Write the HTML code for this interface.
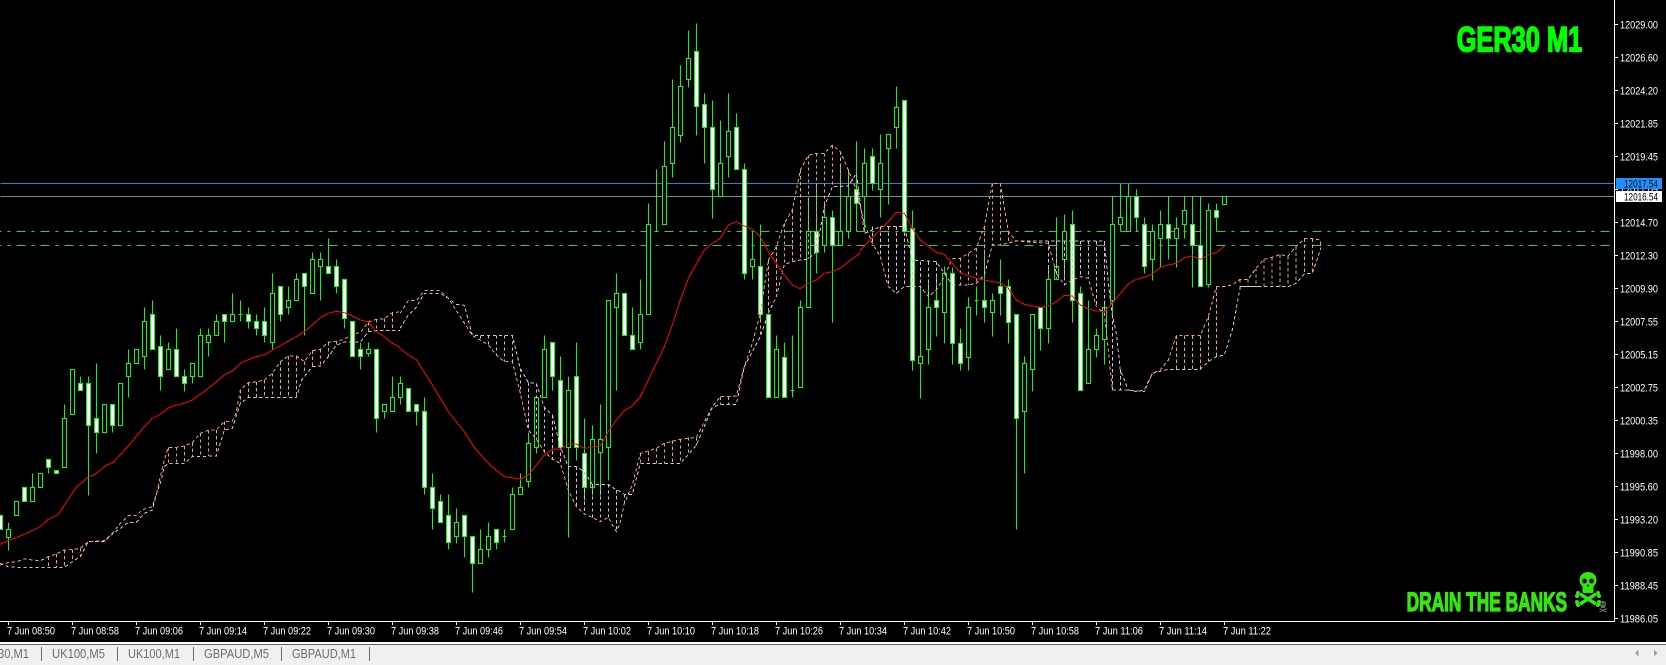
<!DOCTYPE html>
<html><head><meta charset="utf-8"><title>GER30 M1</title>
<style>html,body{margin:0;padding:0;width:1666px;height:665px;overflow:hidden;background:#000}svg{display:block}text{font-family:"Liberation Sans",sans-serif}</style></head>
<body>
<svg xmlns="http://www.w3.org/2000/svg" width="1666" height="665" viewBox="0 0 1666 665">
<rect width="1666" height="665" fill="#000"/>
<g shape-rendering="crispEdges" transform="translate(.5 .5)">
<path d="M0 183H1614" stroke="#2a80d8" fill="none"/>
<path d="M0 196H1614" stroke="#778899" fill="none"/>
<path d="M-8 231H1610M-8 245H1610" stroke="#32cd32" stroke-dasharray="9 6 3 6" fill="none"/>
<path fill="none" stroke="#00ff00" d="M8 522V550M32 473V487M48 467V473M64 404V418M80 376V383M88 376V495M96 363V453M112 425V432M128 349V397M144 307V369M152 300V314M160 335V390M168 342V349M176 328V349M184 369V391M192 376V383M200 328V335M208 328V356M216 314V321M224 321V342M232 293V314M240 300V321M238 314h4M248 307V328M256 314V335M264 307V342M272 273V349M280 314V321M288 286V314M296 273V279M304 286V335M312 252V259M320 252V300M328 238V266M336 259V293M344 318V328M360 342V369M368 342V356M376 418V432M384 411V418M392 376V397M400 376V404M416 411V425M424 397V494M432 473V529M440 494V501M448 494V549M456 508V543M464 536V557M472 563V592M480 529V549M488 522V557M496 542V549M504 529V542M502 536h4M512 487V494M520 473V487M528 432V487M536 447V453M544 335V349M552 376V390M560 356V380M568 376V537M576 342V460M584 418V500M592 425V495M600 404V495M608 447V480M616 273V390M632 307V335M640 279V349M648 203V224M656 169V231M654 231h4M664 141V166M672 79V177M680 65V142M688 30V87M696 23V135M704 93V163M712 100V218M720 120V163M728 93V177M736 113V127M744 163V279M752 231V279M760 224V321M776 335V349M784 342V357M792 335V397M790 390h4M800 300V307M808 200V231M816 183V273M824 203V252M832 210V322M840 163V231M848 169V238M856 141V231M864 148V231M872 148V190M880 134V217M888 148V204M896 86V148M912 210V370M920 285V398M928 280V364M936 273V336M944 266V343M952 267V364M960 328V370M968 297V370M976 286V315M974 300h4M984 249V322M992 293V336M1000 259V315M1008 279V343M1016 418V529M1024 356V473M1032 369V391M1040 328V350M1048 266V343M1056 217V266M1064 214V280M1072 210V322M1080 286V293M1088 300V349M1096 328V357M1104 300V364M1112 196V315M1120 183V231M1128 183V196M1136 189V231M1144 217V273M1152 224V280M1160 210V267M1168 196V259M1176 217V267M1174 231h4M1184 196V238M1192 196V287M1200 196V245M1208 203V287M1216 203V231"/>
<path fill="#000" stroke="#00ff00" d="M6 529h4v8h-4zM14 501h4v14h-4zM30 487h4v14h-4zM38 473h4v14h-4zM62 418h4v49h-4zM70 369h4v45h-4zM102 404h4v28h-4zM118 383h4v42h-4zM126 363h4v13h-4zM134 349h4v14h-4zM142 321h4v35h-4zM166 349h4v20h-4zM190 363h4v13h-4zM198 335h4v41h-4zM206 335h4v7h-4zM214 321h4v14h-4zM230 314h4v7h-4zM270 293h4v49h-4zM286 300h4v7h-4zM294 279h4v21h-4zM310 259h4v34h-4zM318 259h4v7h-4zM366 349h4v4h-4zM382 404h4v7h-4zM390 397h4v14h-4zM398 383h4v14h-4zM454 522h4v14h-4zM478 549h4v14h-4zM486 536h4v13h-4zM510 494h4v35h-4zM518 487h4v7h-4zM526 443h4v38h-4zM534 397h4v50h-4zM542 349h4v48h-4zM566 390h4v57h-4zM590 439h4v48h-4zM598 439h4v13h-4zM606 300h4v147h-4zM614 293h4v14h-4zM638 314h4v28h-4zM646 224h4v90h-4zM662 166h4v58h-4zM670 127h4v36h-4zM678 86h4v49h-4zM686 58h4v21h-4zM718 163h4v33h-4zM726 131h4v25h-4zM750 259h4v7h-4zM774 349h4v48h-4zM798 307h4v80h-4zM806 231h4v76h-4zM822 217h4v28h-4zM838 231h4v14h-4zM846 196h4v35h-4zM862 163h4v33h-4zM878 163h4v26h-4zM886 134h4v14h-4zM894 107h4v20h-4zM918 356h4v7h-4zM926 307h4v42h-4zM942 273h4v39h-4zM966 307h4v50h-4zM990 300h4v12h-4zM1022 363h4v48h-4zM1030 314h4v55h-4zM1046 279h4v49h-4zM1054 266h4v13h-4zM1062 231h4v28h-4zM1086 349h4v34h-4zM1094 335h4v14h-4zM1102 307h4v32h-4zM1110 224h4v76h-4zM1118 217h4v7h-4zM1126 196h4v35h-4zM1150 231h4v28h-4zM1158 224h4v14h-4zM1174 228h4v10h-4zM1182 210h4v14h-4zM1206 210h4v74h-4zM1222 196h4v8h-4z"/>
<path fill="#fff" stroke="#00ff00" d="M-2 515h4v14h-4zM22 487h4v14h-4zM46 459h4v8h-4zM54 470h4v3h-4zM78 383h4v7h-4zM86 383h4v42h-4zM94 418h4v14h-4zM110 404h4v21h-4zM150 314h4v35h-4zM158 346h4v30h-4zM174 349h4v27h-4zM182 376h4v7h-4zM222 314h4v7h-4zM246 314h4v7h-4zM254 321h4v7h-4zM262 321h4v14h-4zM278 286h4v28h-4zM302 273h4v13h-4zM326 266h4v7h-4zM334 266h4v20h-4zM342 279h4v39h-4zM350 321h4v35h-4zM358 349h4v7h-4zM374 349h4v69h-4zM406 388h4v23h-4zM414 404h4v7h-4zM422 411h4v76h-4zM430 487h4v21h-4zM438 501h4v21h-4zM446 515h4v27h-4zM462 515h4v21h-4zM470 536h4v27h-4zM494 529h4v13h-4zM550 342h4v34h-4zM558 380h4v67h-4zM574 376h4v71h-4zM582 453h4v34h-4zM622 293h4v42h-4zM630 335h4v14h-4zM694 51h4v55h-4zM702 104h4v23h-4zM710 127h4v62h-4zM734 127h4v42h-4zM742 169h4v104h-4zM758 266h4v48h-4zM766 314h4v83h-4zM782 357h4v40h-4zM814 231h4v21h-4zM830 217h4v28h-4zM854 189h4v14h-4zM870 156h4v27h-4zM902 100h4v131h-4zM910 228h4v132h-4zM934 300h4v7h-4zM950 273h4v70h-4zM958 343h4v20h-4zM982 300h4v7h-4zM998 286h4v7h-4zM1006 286h4v36h-4zM1014 314h4v104h-4zM1038 307h4v21h-4zM1070 224h4v76h-4zM1078 293h4v97h-4zM1134 196h4v21h-4zM1142 224h4v42h-4zM1166 224h4v14h-4zM1190 224h4v21h-4zM1198 245h4v41h-4zM1214 210h4v7h-4z"/>
</g>
<g shape-rendering="crispEdges" fill="none" stroke-width="3" stroke-dasharray="10 8">
<g transform="translate(0 200) scale(.33333)">
<path stroke="#d8bfd8" d="M0 1090L25 1100L50 1102L193 1102L217 1085L241 1070L265 1025L313 1025L337 1002L361 985L385 967L409 967L433 940L457 930L470 880L481 850L493 800L505 790L553 790L577 770L649 768L673 690L697 685L721 610L745 592L889 592L905 540L937 500L961 498L985 470L1009 436L1033 426L1081 426L1105 395L1129 392L1200 392"/>
<path stroke="#f4a460" d="M0 1095L25 1088L50 1085L73 1077L97 1080L121 1082L145 1070L169 1062L193 1050L217 1049L241 1045L265 1025L313 1022L337 1000L361 970L385 947L409 947L425 930L457 920L470 880L481 830L493 780L505 742L529 742L553 738L577 728L601 700L625 691L649 690L673 665L697 663L708 640L721 570L745 548L769 546L793 540L817 520L841 485L865 468L889 468L913 485L937 452L961 448L985 426L1009 424L1033 418L1057 402L1081 398L1105 366L1129 358L1153 356L1177 338L1200 336"/>
<path stroke="#f4a460" d="M145 1070V1102M169 1062V1102M193 1050V1102M217 1049V1085M241 1045V1070M505 742V790M529 742V790M553 738V790M577 728V770M601 700V768M625 691V768M649 690V768M673 665V690M721 570V610M745 548V592M769 546V592M793 540V592M817 520V592M841 485V592M865 468V592M889 468V592M913 485V520M937 452V500M961 448V498M985 426V470M1009 424V436M1105 366V395M1129 358V392M1153 356V392M1177 338V392"/>
</g>
<g transform="translate(400 200) scale(.33333)">
<path stroke="#d8bfd8" d="M0 385L25 345L49 322L73 280L121 280L145 295L169 313L193 316L217 406L337 406L361 505L385 548L409 550L433 622L457 645L481 740L505 800L529 800L553 815L577 853L625 853L649 870L660 874L673 883L697 883L721 790L841 790L889 736L937 622L961 613L1009 613L1033 500L1081 410L1105 340"/>
<path stroke="#f4a460" d="M0 340L25 302L49 302L73 272L121 272L145 295L217 406L265 435L289 465L313 485L337 485L361 580L385 690L409 718L433 755L457 778L481 790L505 870L529 920L553 942L577 952L601 965L625 952L637 975L649 995L660 970L673 910L697 855L721 760L769 745L793 730L841 718L889 712L937 620L961 590L985 590L1009 588L1033 500L1057 430L1081 340L1105 180"/>
<path stroke="#d8bfd8" d="M241 406V425M265 406V435M289 406V465M313 406V485M337 406V485M361 505V580M385 548V690M409 550V718M433 622V755M457 645V778M481 740V790M505 800V870M529 800V920M553 815V942M577 853V952M601 853V965M625 853V952M649 870V995M673 883V910"/>
<path stroke="#f4a460" d="M721 760V790M745 755V790M769 745V790M793 730V790M817 722V790M841 718V790M865 712V760M889 712V736M961 590V613M985 590V613M1081 340V410M1105 180V340"/>
</g>
<g transform="translate(560 10) scale(.33333)">
<path stroke="#d8bfd8" d="M625 910L649 860L673 764L697 755L721 750L745 747L769 725L793 590L817 530L865 528L889 490L913 670L961 650L1033 650L1057 750L1129 755L1153 790L1177 825"/>
<path stroke="#f4a460" d="M625 750L649 710L673 640L697 600L721 480L745 436L769 430L793 430L817 406L841 425L865 480L889 540L913 640L937 700L961 740L985 830L1009 850L1033 830L1081 830L1105 860L1129 840L1153 800L1177 745"/>
<path stroke="#f4a460" d="M649 710V860M673 640V764M697 600V755M721 480V750M745 436V747M769 430V725M793 430V590M817 406V530M841 425V528M865 480V528"/>
<path stroke="#d8bfd8" d="M937 650V700M961 650V740M985 650V830M1009 650V850M1033 650V830M1057 750V830M1081 755V830M1105 755V860M1129 755V840"/>
</g>
<g transform="translate(860 160) scale(.33333)">
<path stroke="#d8bfd8" d="M277 375L325 375L349 370L373 345L397 255L421 255L469 243L733 243L745 370L757 465L769 520L781 630L805 690L829 695L853 690L877 640L925 628L1021 628L1045 605L1069 590L1093 585L1117 510L1141 380L1200 380"/>
<path stroke="#f4a460" d="M277 295L301 295L325 280L349 265L373 200L397 70L421 70L445 215L469 243L565 250L589 340L613 375L637 360L661 350L685 355L709 440L733 460L745 570L757 690L805 690L853 695L877 640L901 630L925 600L949 527L1021 527L1045 470L1069 380"/>
<path stroke="#f4a460" d="M301 295V375M325 280V375M349 265V370M373 200V345M397 70V255M421 70V255M445 215V250M949 527V628M973 527V628M997 527V628M1021 527V628M1045 470V605M1069 380V590"/>
<path stroke="#d8bfd8" d="M565 243V340M589 243V355M613 243V375M637 243V355M661 243V350M685 243V355M709 243V440M733 243V460M757 465V690M781 630V690"/>
</g>
<g transform="translate(1210 180) scale(.33333)">
<path stroke="#f4a460" d="M18 320L42 320L66 315L90 298L114 298L138 265L162 238L186 232L210 224L234 228L258 200L283 176L307 176L331 180L331 210"/>
<path stroke="#d8bfd8" d="M90 320L234 320L258 310L283 282L307 280L331 210"/>
<path stroke="#f4a460" d="M90 298V320M114 298V318M138 265V320M162 238V320M186 232V320M210 224V320M234 228V320M258 200V310M283 176V282M307 176V280"/>
</g>
</g>
<g shape-rendering="crispEdges" fill="none" stroke="#ff0000" stroke-width="3">
<path transform="translate(0 200) scale(.33333)" d="M0 1033L25 1022L73 1003L121 980L145 958L175 943L200 905L230 860L265 832L290 820L320 795L340 787L385 738L433 680L457 655L481 643L505 624L529 615L553 610L577 600L625 565L673 525L697 513L725 487L769 470L793 465L817 450L841 437L889 410L913 395L937 375L961 353L985 340L1009 334L1033 338L1057 348L1081 360L1105 365L1129 395L1153 410L1177 430L1200 442"/>
<path transform="translate(400 200) scale(.33333)" d="M0 445L25 465L50 480L97 555L145 635L193 695L225 745L270 795L313 830L361 837L385 825L433 765L457 748L481 747L505 732L529 732L553 745L601 738L625 695L649 660L673 632L697 618L721 590L769 490L793 440L817 375L841 300L865 235L913 150L937 130L961 115L985 75L1009 65L1033 78L1057 88L1081 110L1105 155L1129 190L1153 225L1177 255L1200 266"/>
<path transform="translate(560 10) scale(.33333)" d="M720 836L745 820L769 810L793 790L817 785L841 775L865 755L889 738L900 728"/>
<path transform="translate(860 160) scale(.33333)" d="M0 272L25 245L61 210L85 185L109 157L133 160L157 205L181 240L205 258L229 277L253 283L277 310L301 338L325 347L349 355L397 365L421 368L445 385L469 420L493 433L517 438L541 442L565 438L589 425L613 406L637 408L661 435L685 447L709 453L733 455L757 430L781 400L805 372L829 358L853 352L877 342L901 322L925 315L949 310L973 293L997 288L1021 298L1045 285L1069 278L1093 258"/>
</g>
<g shape-rendering="crispEdges" stroke="#fff" fill="none">
<path d="M1614.5 0V621.5M0 621.5H1614.5"/>
<path d="M1615 24.5h3M1615 57.5h3M1615 90.5h3M1615 123.5h3M1615 156.5h3M1615 189.5h3M1615 222.5h3M1615 255.5h3M1615 288.5h3M1615 321.5h3M1615 354.5h3M1615 387.5h3M1615 420.5h3M1615 453.5h3M1615 486.5h3M1615 519.5h3M1615 552.5h3M1615 585.5h3M1615 618.5h3"/>
<path d="M8.5 622v3M72.5 622v3M136.5 622v3M200.5 622v3M264.5 622v3M328.5 622v3M392.5 622v3M456.5 622v3M520.5 622v3M584.5 622v3M648.5 622v3M712.5 622v3M776.5 622v3M840.5 622v3M904.5 622v3M968.5 622v3M1032.5 622v3M1096.5 622v3M1160.5 622v3M1224.5 622v3"/>
</g>
<g fill="#fff" font-size="11" lengthAdjust="spacingAndGlyphs">
<text x="1620" y="28.5" textLength="38" lengthAdjust="spacingAndGlyphs">12029.00</text>
<text x="1620" y="61.5" textLength="38" lengthAdjust="spacingAndGlyphs">12026.60</text>
<text x="1620" y="94.5" textLength="38" lengthAdjust="spacingAndGlyphs">12024.20</text>
<text x="1620" y="127.5" textLength="38" lengthAdjust="spacingAndGlyphs">12021.85</text>
<text x="1620" y="160.5" textLength="38" lengthAdjust="spacingAndGlyphs">12019.45</text>
<text x="1620" y="193.5" textLength="38" lengthAdjust="spacingAndGlyphs">12017.05</text>
<text x="1620" y="226.5" textLength="38" lengthAdjust="spacingAndGlyphs">12014.70</text>
<text x="1620" y="259.5" textLength="38" lengthAdjust="spacingAndGlyphs">12012.30</text>
<text x="1620" y="292.5" textLength="38" lengthAdjust="spacingAndGlyphs">12009.90</text>
<text x="1620" y="325.5" textLength="38" lengthAdjust="spacingAndGlyphs">12007.55</text>
<text x="1620" y="358.5" textLength="38" lengthAdjust="spacingAndGlyphs">12005.15</text>
<text x="1620" y="391.5" textLength="38" lengthAdjust="spacingAndGlyphs">12002.75</text>
<text x="1620" y="424.5" textLength="38" lengthAdjust="spacingAndGlyphs">12000.35</text>
<text x="1620" y="457.5" textLength="38" lengthAdjust="spacingAndGlyphs">11998.00</text>
<text x="1620" y="490.5" textLength="38" lengthAdjust="spacingAndGlyphs">11995.60</text>
<text x="1620" y="523.5" textLength="38" lengthAdjust="spacingAndGlyphs">11993.20</text>
<text x="1620" y="556.5" textLength="38" lengthAdjust="spacingAndGlyphs">11990.85</text>
<text x="1620" y="589.5" textLength="38" lengthAdjust="spacingAndGlyphs">11988.45</text>
<text x="1620" y="622.5" textLength="38" lengthAdjust="spacingAndGlyphs">11986.05</text>
</g>
<rect x="1616" y="178" width="46" height="11" fill="#1e90ff"/>
<text x="1624" y="187.5" font-size="11" fill="#0a0a0a" textLength="34" lengthAdjust="spacingAndGlyphs">12017.54</text>
<rect x="1616" y="191" width="46" height="11" fill="#fff"/>
<text x="1624" y="200.5" font-size="11" fill="#000" textLength="34" lengthAdjust="spacingAndGlyphs">12016.54</text>
<g fill="#fff" font-size="11">
<text x="7" y="634.5" textLength="48" lengthAdjust="spacingAndGlyphs">7 Jun 08:50</text>
<text x="71" y="634.5" textLength="48" lengthAdjust="spacingAndGlyphs">7 Jun 08:58</text>
<text x="135" y="634.5" textLength="48" lengthAdjust="spacingAndGlyphs">7 Jun 09:06</text>
<text x="199" y="634.5" textLength="48" lengthAdjust="spacingAndGlyphs">7 Jun 09:14</text>
<text x="263" y="634.5" textLength="48" lengthAdjust="spacingAndGlyphs">7 Jun 09:22</text>
<text x="327" y="634.5" textLength="48" lengthAdjust="spacingAndGlyphs">7 Jun 09:30</text>
<text x="391" y="634.5" textLength="48" lengthAdjust="spacingAndGlyphs">7 Jun 09:38</text>
<text x="455" y="634.5" textLength="48" lengthAdjust="spacingAndGlyphs">7 Jun 09:46</text>
<text x="519" y="634.5" textLength="48" lengthAdjust="spacingAndGlyphs">7 Jun 09:54</text>
<text x="583" y="634.5" textLength="48" lengthAdjust="spacingAndGlyphs">7 Jun 10:02</text>
<text x="647" y="634.5" textLength="48" lengthAdjust="spacingAndGlyphs">7 Jun 10:10</text>
<text x="711" y="634.5" textLength="48" lengthAdjust="spacingAndGlyphs">7 Jun 10:18</text>
<text x="775" y="634.5" textLength="48" lengthAdjust="spacingAndGlyphs">7 Jun 10:26</text>
<text x="839" y="634.5" textLength="48" lengthAdjust="spacingAndGlyphs">7 Jun 10:34</text>
<text x="903" y="634.5" textLength="48" lengthAdjust="spacingAndGlyphs">7 Jun 10:42</text>
<text x="967" y="634.5" textLength="48" lengthAdjust="spacingAndGlyphs">7 Jun 10:50</text>
<text x="1031" y="634.5" textLength="48" lengthAdjust="spacingAndGlyphs">7 Jun 10:58</text>
<text x="1095" y="634.5" textLength="48" lengthAdjust="spacingAndGlyphs">7 Jun 11:06</text>
<text x="1159" y="634.5" textLength="48" lengthAdjust="spacingAndGlyphs">7 Jun 11:14</text>
<text x="1223" y="634.5" textLength="48" lengthAdjust="spacingAndGlyphs">7 Jun 11:22</text>
</g>
<text x="1456.7" y="51.6" font-size="35" font-weight="700" fill="#00ff00" stroke="#00ff00" stroke-width="1.6" textLength="125.5" lengthAdjust="spacingAndGlyphs">GER30 M1</text>
<text x="1406.6" y="610.8" font-size="26.5" font-weight="700" fill="#33e80f" stroke="#33e80f" stroke-width="1.3" textLength="160.5" lengthAdjust="spacingAndGlyphs">DRAIN THE BANKS</text>
<g id="sk">
<path fill="#33e80f" d="M1588 572c5 0 8.500 3.500 8.500 8 0 3-1.500 5-3 6.500v4.500c0 1.200-1 2-2 2h-7c-1 0-2-.8-2-2v-4.500c-1.500-1.500-3-3.500-3-6.500 0-4.500 3.500-8 8.500-8z"/>
<ellipse cx="1584.500" cy="581" rx="2.300" ry="2.500" fill="#000"/><ellipse cx="1591.500" cy="581" rx="2.300" ry="2.500" fill="#000"/>
<path d="M1588 584l-1.200 2.500h2.400z" fill="#000"/>
<path d="M1580 594l16 10M1596 594l-16 10" stroke="#33e80f" stroke-width="3.500"/>
<g fill="#33e80f"><circle cx="1578" cy="593" r="2"/><circle cx="1577" cy="596" r="2"/><circle cx="1598" cy="593" r="2"/><circle cx="1599" cy="596" r="2"/><circle cx="1578" cy="605" r="2"/><circle cx="1577" cy="602" r="2"/><circle cx="1598" cy="605" r="2"/><circle cx="1599" cy="602" r="2"/></g>
</g>
<g transform="translate(1603 601)">
<path fill="#666" d="M0 0c2 0 3.200 1.300 3.200 3 0 1.200-.6 2-1.200 2.500v1.500h-4v-1.500c-.6-.5-1.200-1.300-1.200-2.500 0-1.700 1.200-3 3.200-3z"/>
<circle cx="-1.200" cy="3" r=".8" fill="#000"/><circle cx="1.200" cy="3" r=".8" fill="#000"/>
<path d="M-3.500 7.500l7 3.500M3.500 7.500l-7 3.500" stroke="#666" stroke-width="1.200"/>
</g>
<rect x="0" y="642" width="1666" height="2" fill="#fff"/>
<rect x="0" y="644" width="1666" height="1" fill="#646464"/>
<rect x="0" y="645" width="1666" height="20" fill="#f0f0f0"/>
<g fill="#6d6d6d" font-size="13">
<text x="-2" y="658" textLength="31" lengthAdjust="spacingAndGlyphs">30,M1</text>
<text x="52" y="658" textLength="53" lengthAdjust="spacingAndGlyphs">UK100,M5</text>
<text x="128" y="658" textLength="52" lengthAdjust="spacingAndGlyphs">UK100,M1</text>
<text x="204" y="658" textLength="65" lengthAdjust="spacingAndGlyphs">GBPAUD,M5</text>
<text x="292" y="658" textLength="64" lengthAdjust="spacingAndGlyphs">GBPAUD,M1</text>
</g>
<path shape-rendering="crispEdges" d="M41.500 647v14M117.500 647v14M193.500 647v14M281.500 647v14M369.500 647v14" stroke="#6a6a6a" fill="none"/>
<path d="M1638.500 649.500v7l-3.500-3.500zM1654 649.500v7l3.500-3.500z" fill="#a0a0a0"/>
</svg>
</body></html>
